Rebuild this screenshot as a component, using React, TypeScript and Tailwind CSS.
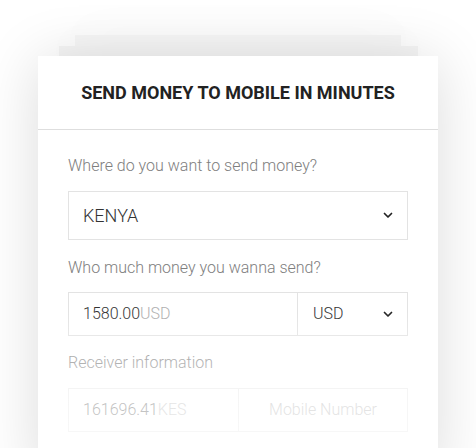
import React from "react";

const Chevron = () => (
  <svg width="10" height="7" viewBox="0 0 10 7" fill="none">
    <polyline points="1.5,1.5 5,5 8.5,1.5" stroke="#222" strokeWidth="1.7" strokeLinecap="round" strokeLinejoin="round" />
  </svg>
);

export default function App() {
  return (
    <div className="w-[476px] h-[448px] overflow-hidden bg-white flex flex-col items-center pt-[35px] font-['Roboto',sans-serif]">
      <div className="w-[326px] h-[11px] shrink-0 bg-[#f7f7f7] shadow-[0_0_50px_rgba(0,0,0,0.05)]" />
      <div className="w-[359px] h-[10px] shrink-0 bg-[#f5f5f5] shadow-[0_0_50px_rgba(0,0,0,0.05)]" />
      <div className="relative w-[400px] h-[420px] shrink-0 bg-white shadow-[0_4px_56px_rgba(0,0,0,0.14)]">
        <div className="h-[74px] flex items-center justify-center border-b border-[#dedede]">
          <h1 className="text-[18px] font-bold text-[#222]">SEND MONEY TO MOBILE IN MINUTES</h1>
        </div>
        <div className="px-[30px] pt-[26px] flex flex-col">
          <label className="text-[16px] leading-[20px] font-light text-[#7e7e7e]">Where do you want to send money?</label>
          <div className="mt-[15px] h-[49px] border border-[#e3e3e3] flex items-center justify-between pl-[14px] pr-[14px]">
            <span className="text-[18px] text-[#333] font-light">KENYA</span>
            <Chevron />
          </div>
          <label className="mt-[18px] text-[16px] leading-[20px] font-light text-[#7e7e7e]">Who much money you wanna send?</label>
          <div className="mt-[14px] h-[44px] border border-[#e3e3e3] flex">
            <div className="w-[229px] border-r border-[#e3e3e3] flex items-center pl-[14px] text-[16px] font-light">
              <span className="text-[#333]">1580.00</span>
              <span className="text-[#b0b0b0]">USD</span>
            </div>
            <div className="flex-1 flex items-center justify-between pl-[15px] pr-[14px]">
              <span className="text-[16px] font-light text-[#333]">USD</span>
              <Chevron />
            </div>
          </div>
          <label className="mt-[17px] text-[16px] leading-[20px] font-light text-[#7e7e7e]">Receiver information</label>
          <div className="mt-[15px] h-[44px] border border-[#e3e3e3] flex">
            <div className="w-[170px] border-r border-[#e3e3e3] flex items-center pl-[14px] text-[16px] font-light">
              <span className="text-[#444]">161696.41</span>
              <span className="text-[#b0b0b0]">KES</span>
            </div>
            <div className="flex-1 flex items-center justify-center text-[16px] font-light text-[#aaa]">Mobile Number</div>
          </div>
        </div>
        <div className="absolute inset-x-0 top-[255px] bottom-0 bg-gradient-to-b from-white/0 via-white/65 to-white/80" />
      </div>
    </div>
  );
}
